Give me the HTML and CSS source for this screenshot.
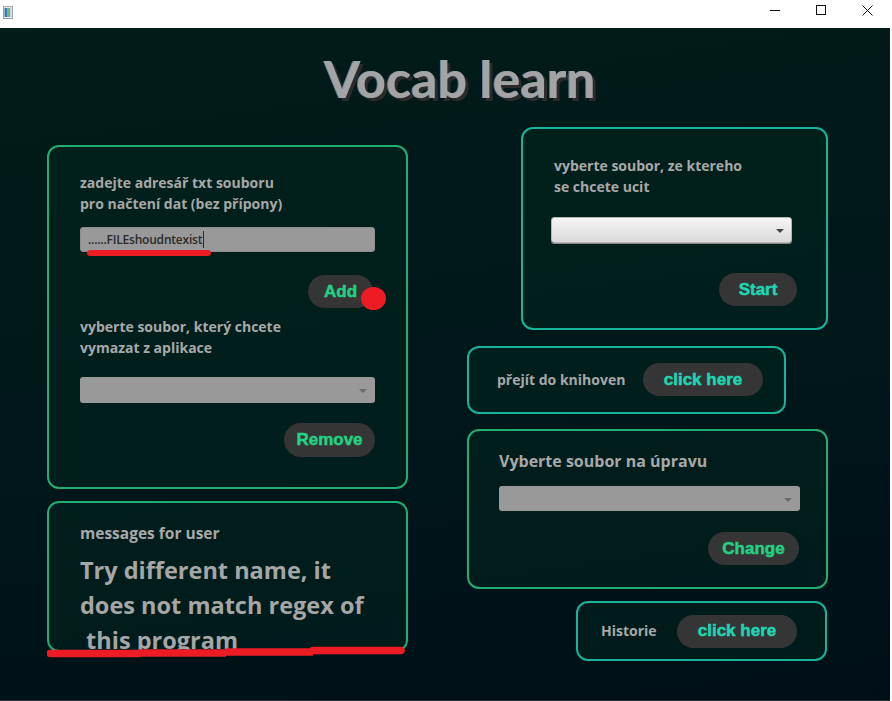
FILE: index.html
```html
<!DOCTYPE html>
<html lang="cs">
<head>
<meta charset="utf-8">
<title>Vocab learn</title>
<link rel="stylesheet" href="styles.css">
</head>
<body>
<div class="window">
  <header class="titlebar">
    <svg class="app-icon" viewBox="0 0 10 13" aria-hidden="true">
      <rect x="0.5" y="0.5" width="9" height="12" fill="#e8ecef" stroke="#9aa3aa"/>
      <rect x="1.5" y="2" width="3" height="9" fill="#3d7fa8"/>
      <rect x="4.5" y="2" width="2.5" height="9" fill="#6fb08a"/>
      <rect x="7" y="2" width="1.5" height="9" fill="#c9d6dc"/>
    </svg>
    <div class="controls">
      <span class="ctl"><svg viewBox="0 0 10 10" width="10" height="10"><path d="M0 5.5h10" stroke="#111" stroke-width="1"/></svg></span>
      <span class="ctl"><svg viewBox="0 0 10 10" width="10" height="10"><rect x="0.5" y="0.5" width="9" height="9" fill="none" stroke="#111" stroke-width="1"/></svg></span>
      <span class="ctl"><svg viewBox="0 0 11 11" width="11" height="11"><path d="M0.5 0.5l10 10M10.5 0.5l-10 10" stroke="#111" stroke-width="1"/></svg></span>
    </div>
  </header>

  <main class="app">
    <h1 class="title">Vocab learn</h1>

    <div class="columns">
      <div class="col col-left">
        <section class="card card-import">
          <p class="label">zadejte adresář txt souboru<br>pro načtení dat (bez přípony)</p>
          <div class="field">......FILEshoudntexist<span class="caret"></span><span class="mark-line"></span></div>
          <div class="actions actions-add">
            <span class="btn-wrap"><button class="btn btn-green btn-add">Add</button><span class="mark-dot"></span></span>
          </div>
          <p class="label label-remove">vyberte soubor, který chcete<br>vymazat z aplikace</p>
          <div class="combo combo-gray"><span class="arrow"></span></div>
          <div class="actions actions-remove">
            <button class="btn btn-green btn-remove">Remove</button>
          </div>
        </section>

        <section class="card card-msg">
          <p class="label label-msg">messages for user</p>
          <p class="message">Try different name, it<br>does not match regex of<br>&nbsp;this program</p>
        </section>
      </div>

      <div class="col col-right">
        <section class="card card-teal card-learn">
          <p class="label">vyberte soubor, ze ktereho<br>se chcete ucit</p>
          <div class="combo combo-light"><span class="arrow"></span></div>
          <div class="actions actions-start">
            <button class="btn btn-teal btn-start">Start</button>
          </div>
        </section>

        <section class="card card-teal card-lib">
          <p class="label">přejít do knihoven</p>
          <button class="btn btn-teal btn-click">click here</button>
        </section>

        <section class="card card-edit">
          <p class="label label-edit">Vyberte soubor na úpravu</p>
          <div class="combo combo-gray combo-edit"><span class="arrow"></span></div>
          <div class="actions actions-change">
            <button class="btn btn-green btn-change">Change</button>
          </div>
        </section>

        <section class="card card-teal card-hist">
          <p class="label label-hist">Historie</p>
          <button class="btn btn-teal btn-click">click here</button>
        </section>
      </div>
    </div>
  </main>

  <svg class="mark-bottom" viewBox="0 0 360 16" width="360" height="16" aria-hidden="true">
    <path d="M3 8.5H92" stroke="#ed1c24" stroke-width="7.5" stroke-linecap="round"/>
    <path d="M92 8H179" stroke="#ed1c24" stroke-width="7.5"/>
    <path d="M179 7H266" stroke="#ed1c24" stroke-width="7.5"/>
    <path d="M266 5.5H354" stroke="#ed1c24" stroke-width="7.5" stroke-linecap="round"/>
  </svg>
</div>
</body>
</html>
```

FILE: styles.css
```css
* {
  box-sizing: border-box;
  margin: 0;
  padding: 0;
}

html, body {
  width: 892px;
  height: 701px;
  overflow: hidden;
}

body {
  background: #ffffff;
  font-family: "Open Sans", "Liberation Sans", sans-serif;
}

.window {
  position: relative;
  width: 892px;
  height: 701px;
  display: flex;
  flex-direction: column;
}

/* ---------- title bar ---------- */
.titlebar {
  height: 28px;
  flex: none;
  background: #ffffff;
  display: flex;
  align-items: center;
  justify-content: space-between;
  padding-left: 3px;
  padding-right: 2px;
}

.app-icon {
  width: 10px;
  height: 13px;
  margin-top: -3px;
}

.controls {
  display: flex;
  height: 28px;
}

.ctl {
  width: 46px;
  height: 28px;
  display: flex;
  align-items: center;
  justify-content: center;
  margin-top: -4px;
}

/* ---------- app area ---------- */
.app {
  flex: 1;
  background: linear-gradient(172deg, #021c18 0%, #01171a 55%, #000f17 100%);
  padding-left: 47px;
  border-bottom: 1px solid #2a3034;
  margin-right: 2px;
}

.title {
  width: 845px;
  height: 99px;
  padding-top: 21px;
  padding-right: 19px;
  text-align: center;
  font-family: "Lato", "Open Sans", sans-serif;
  font-weight: 700;
  font-size: 52px;
  line-height: 58px;
  color: #a4a4a4;
  text-shadow: -1px 0 0 #5d7f9a, 3px 3px 0 #2b2b2b;
}

.columns {
  display: flex;
  gap: 59px;
  align-items: flex-start;
}

.col {
  width: 361px;
  display: flex;
  flex-direction: column;
}

.col-left {
  margin-top: 18px;
  gap: 12px;
}

/* ---------- cards ---------- */
.card {
  border: 2px solid #22ae70;
  border-radius: 12px;
  background: rgba(0, 40, 30, 0.45);
}

.card-teal {
  border-color: #17b39b;
}

.label {
  font-size: 14px;
  font-weight: 700;
  line-height: 21px;
  color: #a8a8a8;
}

/* left: import / remove */
.card-import {
  height: 344px;
  padding: 25px 31px 0 31px;
}

.field {
  position: relative;
  margin-top: 13px;
  height: 25px;
  background: #999999;
  border: 1px solid #8d8d8d;
  border-radius: 3px;
  padding-left: 7px;
  font-size: 12px;
  font-weight: 600;
  line-height: 23px;
  color: #2a2a2a;
  letter-spacing: -0.2px;
}

.caret {
  display: inline-block;
  width: 1px;
  height: 17px;
  background: #2a2a2a;
  vertical-align: -4px;
  margin-left: 1px;
}

.mark-line {
  position: absolute;
  left: 6px;
  top: 22px;
  width: 124px;
  height: 6px;
  border-radius: 3px;
  background: #ed1c24;
}

.actions {
  display: flex;
  justify-content: flex-end;
}

.actions-add {
  margin-top: 23px;
  padding-right: 2px;
}

.btn-wrap {
  position: relative;
  display: inline-flex;
}

.mark-dot {
  position: absolute;
  right: -13px;
  top: 12px;
  width: 25px;
  height: 23px;
  border-radius: 50%;
  background: #ed1c24;
}

.label-remove {
  margin-top: 8px;
}

.combo {
  position: relative;
  height: 26px;
  border-radius: 3px;
}

.combo-gray {
  margin-top: 19px;
  background: #999999;
}

.arrow {
  position: absolute;
  right: 8px;
  top: 50%;
  margin-top: -1px;
  width: 0;
  height: 0;
  border-left: 4px solid transparent;
  border-right: 4px solid transparent;
  border-top: 4px solid #6b6b6b;
}

.actions-remove {
  margin-top: 20px;
}

/* left: messages */
.card-msg {
  height: 151px;
  padding: 20px 31px 0 31px;
}

.label-msg {
  font-size: 15.5px;
}

.message {
  margin-top: 9px;
  font-size: 23.5px;
  font-weight: 700;
  line-height: 35px;
  color: #a6a6a6;
  white-space: nowrap;
}

/* right column */
.card-learn {
  margin-left: 54px;
  width: 307px;
  height: 203px;
  padding: 26px 29px 0 28px;
}

.card-learn .label {
  padding-left: 3px;
}

.combo-light {
  margin-top: 20px;
  width: 241px;
  height: 26px;
  background: linear-gradient(#f6f6f6, #dadada);
  border: 1px solid #b5b5b5;
  box-shadow: 0 1px 0 #8a8a8a;
}

.combo-light .arrow {
  border-top-color: #444444;
  right: 7px;
}

.actions-start {
  margin-top: 30px;
}

.card-lib {
  margin-top: 16px;
  width: 319px;
  height: 68px;
  display: flex;
  align-items: center;
  justify-content: space-between;
  padding: 0 21px 1px 28px;
}

.card-edit {
  margin-top: 15px;
  height: 160px;
  padding: 20px 26px 0 30px;
}

.label-edit {
  font-size: 16px;
}

.combo-edit {
  margin-top: 14px;
  height: 25px;
}

.actions-change {
  margin-top: 21px;
  padding-right: 1px;
}

.card-hist {
  margin-top: 12px;
  margin-left: 109px;
  width: 251px;
  height: 60px;
  display: flex;
  align-items: center;
  justify-content: space-between;
  padding: 0 28px 0 23px;
}

.label-hist {
  font-size: 14px;
  margin-top: -2px;
}

/* ---------- buttons ---------- */
.btn {
  height: 33px;
  border: none;
  border-radius: 17px;
  background: #353535;
  font-family: "Liberation Sans", Arial, sans-serif;
  font-weight: 700;
  font-size: 17px;
  text-align: center;
  -webkit-text-stroke: 0.5px currentColor;
}

.btn-green {
  color: #24d084;
}

.btn-teal {
  color: #20d6b2;
}

.btn-add { width: 65px; }
.btn-remove { width: 91px; height: 34px; }
.btn-change { width: 91px; }
.btn-start { width: 78px; }
.btn-click { width: 120px; }

/* ---------- annotation ---------- */
.mark-bottom {
  position: absolute;
  left: 47px;
  top: 645px;
}
```
